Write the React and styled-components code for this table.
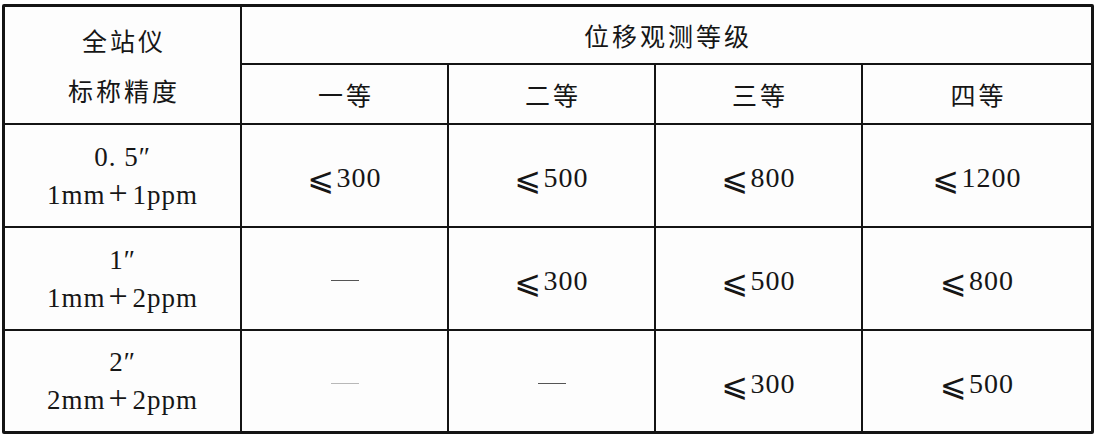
import React from "react";
import styled, { createGlobalStyle } from "styled-components";

const Global = createGlobalStyle`
  html, body { margin: 0; padding: 0; background: #ffffff; }
  #root { width: 1100px; height: 440px; }
`;

const Page = styled.div`
  padding: 4px 0 0 2px;
`;

const Table = styled.div`
  display: grid;
  grid-template-columns: 235px 205px 205px 205px 228px;
  grid-template-rows: 56px 58px 101px 101px 100px;
  gap: 2px;
  width: max-content;
  background: #141414;
  border: 3px solid #141414;
  border-radius: 2px;
  color: #161616;
`;

const Cell = styled.div`
  background: #fdfdfd;
  display: flex;
  flex-direction: column;
  align-items: center;
  justify-content: center;
  grid-row: ${(p) => p.$row || "auto"};
  grid-column: ${(p) => p.$col || "auto"};
`;

const CjkText = styled.span`
  font-family: "Noto Sans CJK SC", "Noto Sans", sans-serif;
  font-size: 25px;
  letter-spacing: 3px;
  padding-left: 3px;
  line-height: ${(p) => p.$lh || "30px"};
  display: block;
`;

const NumLine = styled.span`
  font-family: "Liberation Serif", "Times New Roman", serif;
  font-size: 27px;
  letter-spacing: 1px;
  line-height: 38px;
  display: flex;
  align-items: baseline;
`;

const Plus = styled.span`
  font-size: 34px;
  font-weight: 300;
  line-height: 1;
  margin: 0 4px 0 3px;
`;

const Value = styled.span`
  font-family: "Liberation Serif", "Times New Roman", serif;
  font-size: 28px;
  letter-spacing: 1px;
  margin-top: 3px;
  display: flex;
  align-items: baseline;
`;

const Leq = styled.span`
  font-family: "DejaVu Sans", "DejaVu Serif", serif;
  font-size: 32px;
  line-height: 1;
  margin-right: 1px;
  transform: translateY(3px);
`;

const Dash = styled.span`
  display: block;
  width: 28px;
  height: 0;
  border-top: ${(p) => (p.$faint ? "1px solid #b8b8b8" : "1.5px solid #555")};
  margin-top: 4px;
`;

const grades = ["一等", "二等", "三等", "四等"];

const rows = [
  { a: "0. 5″", b: ["1mm", "1ppm"], v: ["300", "500", "800", "1200"] },
  { a: "1″", b: ["1mm", "2ppm"], v: [null, "300", "500", "800"] },
  { a: "2″", b: ["2mm", "2ppm"], v: ["faint", null, "300", "500"] },
];

export default function App() {
  return (
    <>
      <Global />
      <Page>
        <Table>
          <Cell $row="1 / span 2" $col="1">
            <CjkText $lh="50px">全站仪</CjkText>
            <CjkText $lh="50px">标称精度</CjkText>
          </Cell>
          <Cell $row="1" $col="2 / span 4">
            <CjkText>位移观测等级</CjkText>
          </Cell>
          {grades.map((g) => (
            <Cell key={g}>
              <CjkText>{g}</CjkText>
            </Cell>
          ))}
          {rows.map((r, i) => (
            <React.Fragment key={i}>
              <Cell>
                <NumLine>{r.a}</NumLine>
                <NumLine>
                  {r.b[0]}
                  <Plus>+</Plus>
                  {r.b[1]}
                </NumLine>
              </Cell>
              {r.v.map((v, j) => (
                <Cell key={j}>
                  {v === null ? (
                    <Dash />
                  ) : v === "faint" ? (
                    <Dash $faint />
                  ) : (
                    <Value>
                      <Leq>⩽</Leq>
                      {v}
                    </Value>
                  )}
                </Cell>
              ))}
            </React.Fragment>
          ))}
        </Table>
      </Page>
    </>
  );
}
